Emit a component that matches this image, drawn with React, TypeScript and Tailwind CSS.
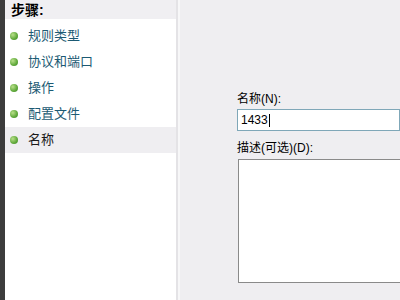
const steps = ['规则类型', '协议和端口', '操作', '配置文件', '名称']

function Bullet() {
  return (
    <span className="block h-[8px] w-[8px] shrink-0 rounded-full bg-[radial-gradient(circle_at_35%_35%,#b9e08a,#5fa83a_60%,#3f8a2a)]" />
  )
}

export default function App() {
  return (
    <div
      className="flex h-[300px] w-[400px] overflow-hidden bg-[#efeef1] text-[13px] text-black"
      style={{ fontFamily: '"Liberation Sans", "Noto Sans CJK SC", sans-serif' }}
    >
      {/* dark window edge */}
      <div className="w-[5px] shrink-0 bg-[#3c3c3c]" />

      {/* steps panel */}
      <div className="flex w-[171px] shrink-0 flex-col bg-white">
        <div className="flex h-[19px] items-center bg-[#f0eff2] pl-[6px] text-[14px] font-bold leading-none">
          步骤:
        </div>
        <div className="flex flex-col pt-[4px]">
          {steps.map((s, i) => {
            const active = i === steps.length - 1
            return (
              <div
                key={s}
                className={
                  active
                    ? 'flex h-[26px] items-center gap-[10px] bg-[#efeef1] pl-[5px] text-[#1a1a1a]'
                    : 'flex h-[26px] items-center gap-[10px] pl-[5px] text-[#1c5a73]'
                }
              >
                <Bullet />
                <span>{s}</span>
              </div>
            )
          })}
        </div>
      </div>

      {/* divider */}
      <div className="w-[2px] shrink-0 bg-[#e4e3e6]" />
      <div className="w-[2px] shrink-0 bg-[#f7f7f8]" />

      {/* form area */}
      <div className="flex flex-1 flex-col pl-[57px] pt-[90px] text-[12px]">
        <div className="leading-[18px]">名称(N):</div>
        <div className="mt-[1px] flex h-[22px] items-center border border-[#7fa7b8] bg-white pl-[3px]">
          <span>1433</span>
          <span className="ml-[1px] h-[13px] w-px bg-black" />
        </div>
        <div className="mt-[8px] leading-[18px]">描述(可选)(D):</div>
        <div className="ml-[1px] mt-[2px] h-[124px] border border-[#8a8a8a] border-r-0 bg-white" />
      </div>
    </div>
  )
}
